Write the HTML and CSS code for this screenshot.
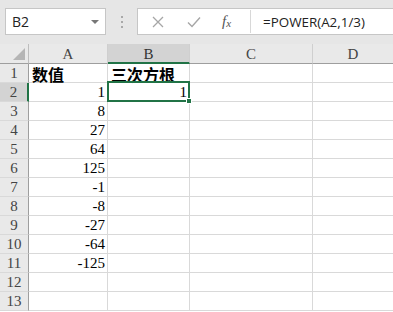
FILE: index.html
```html
<!DOCTYPE html>
<html lang="zh">
<head>
<meta charset="utf-8">
<link rel="stylesheet" href="styles.css">
</head>
<body>
<div class="toolbar">
  <div class="namebox"><span>B2</span><span class="caret"></span></div>
  <div class="dots"><i></i><i></i><i></i></div>
  <div class="fbar">
    <div class="fbtns">
      <svg class="ico" width="14" height="14" viewBox="0 0 14 14"><path d="M2 2L12 12M12 2L2 12" stroke="#a6a6a6" stroke-width="1.3" fill="none"/></svg>
      <svg class="ico" width="16" height="14" viewBox="0 0 16 14"><path d="M2 7.5L6 11.5L14 2.5" stroke="#a6a6a6" stroke-width="1.4" fill="none"/></svg>
      <span class="fx"><i>f</i><sub>x</sub></span>
    </div>
    <div class="ftext">=POWER(A2,1/3)</div>
  </div>
</div>
<div class="gap"></div>
<div class="sheet">
  <div class="hd corner"><span class="tri"></span></div>
  <div class="hd col">A</div>
  <div class="hd col sel">B</div>
  <div class="hd col">C</div>
  <div class="hd col last">D</div>

  <div class="hd row">1</div><div class="c zh">数值</div><div class="c zh">三次方根</div><div class="c"></div><div class="c last"></div>
  <div class="hd row sel">2</div><div class="c n">1</div><div class="c n active">1<span class="handle"></span></div><div class="c"></div><div class="c last"></div>
  <div class="hd row">3</div><div class="c n">8</div><div class="c"></div><div class="c"></div><div class="c last"></div>
  <div class="hd row">4</div><div class="c n">27</div><div class="c"></div><div class="c"></div><div class="c last"></div>
  <div class="hd row">5</div><div class="c n">64</div><div class="c"></div><div class="c"></div><div class="c last"></div>
  <div class="hd row">6</div><div class="c n">125</div><div class="c"></div><div class="c"></div><div class="c last"></div>
  <div class="hd row">7</div><div class="c n">-1</div><div class="c"></div><div class="c"></div><div class="c last"></div>
  <div class="hd row">8</div><div class="c n">-8</div><div class="c"></div><div class="c"></div><div class="c last"></div>
  <div class="hd row">9</div><div class="c n">-27</div><div class="c"></div><div class="c"></div><div class="c last"></div>
  <div class="hd row">10</div><div class="c n">-64</div><div class="c"></div><div class="c"></div><div class="c last"></div>
  <div class="hd row">11</div><div class="c n">-125</div><div class="c"></div><div class="c"></div><div class="c last"></div>
  <div class="hd row">12</div><div class="c"></div><div class="c"></div><div class="c"></div><div class="c last"></div>
  <div class="hd row">13</div><div class="c"></div><div class="c"></div><div class="c"></div><div class="c last"></div>
</div>
</body>
</html>
```
FILE: styles.css
```css
* { box-sizing: border-box; }
html, body { margin: 0; padding: 0; }
body {
  width: 393px;
  height: 312px;
  overflow: hidden;
  background: #fff;
  font-family: "Liberation Serif", "Noto Sans CJK SC", serif;
}
.toolbar {
  height: 35px;
  background: #e6e6e6;
  display: flex;
  align-items: flex-end;
  padding-left: 5px;
}
.namebox {
  width: 101px;
  height: 27px;
  background: #fff;
  border: 1px solid #c6c6c6;
  display: flex;
  align-items: center;
  justify-content: space-between;
  padding: 0 5px 0 6px;
  font-family: "Open Sans", "Liberation Sans", sans-serif;
  font-size: 14px;
  color: #222;
}
.caret {
  width: 0; height: 0;
  border-left: 4px solid transparent;
  border-right: 4px solid transparent;
  border-top: 4px solid #777;
  margin-right: 1px;
}
.dots {
  width: 31px;
  height: 27px;
  display: flex;
  flex-direction: column;
  align-items: center;
  justify-content: center;
  gap: 3px;
}
.dots i { width: 2px; height: 2px; background: #a8a8a8; display: block; }
.fbar {
  flex: 1;
  height: 27px;
  background: #fff;
  border: 1px solid #c6c6c6;
  border-right: none;
  display: flex;
}
.fbtns {
  width: 113px;
  display: flex;
  align-items: center;
  padding-left: 13px;
  border-right: 1px solid #d8d8d8;
  margin: 1px 0;
}
.fbtns .ico { display: block; }
.fbtns .ico:first-child { margin-right: 21px; }
.fx {
  margin-left: 20px;
  font-family: "Liberation Serif", serif;
  font-size: 15px;
  color: #555;
  line-height: 1;
}
.fx sub { font-size: 11px; font-style: italic; vertical-align: -1px; }
.ftext {
  padding-left: 12px;
  font-family: "Open Sans", "Liberation Sans", sans-serif;
  font-size: 13.4px;
  color: #222;
  display: flex;
  align-items: center;
}
.gap { height: 9px; background: #e6e6e6; }
.sheet {
  display: grid;
  grid-template-columns: 29px 79px 82px 123px 1fr;
  grid-template-rows: 20px repeat(13, 19px);
}
.hd {
  background: #e9e9e9;
  color: #444;
  font-size: 15px;
  display: flex;
  align-items: center;
  justify-content: center;
}
.col {
  border-right: 1px solid #cfcfcf;
  border-bottom: 1px solid #9e9e9e;
  padding-top: 2px;
}
.col.last { border-right: none; }
.col.sel {
  background: #d3d3d3;
  border-bottom: 2px solid #217346;
  color: #333;
}
.corner {
  border-right: 1px solid #bdbdbd;
  border-bottom: 1px solid #9e9e9e;
  position: relative;
}
.tri {
  position: absolute;
  right: 3px;
  bottom: 3px;
  width: 0; height: 0;
  border-left: 12px solid transparent;
  border-bottom: 12px solid #b5b5b5;
}
.row {
  border-right: 1px solid #9e9e9e;
  border-bottom: 1px solid #d9d9d9;
  padding-top: 1px;
}
.row.sel {
  background: #d3d3d3;
  border-right: 2px solid #217346;
}
.c {
  border-right: 1px solid #d9d9d9;
  border-bottom: 1px solid #d9d9d9;
  font-size: 15px;
  color: #000;
  display: flex;
  align-items: center;
  line-height: 1;
  padding-top: 1px;
}
.c.last { border-right: none; }
.c.n { justify-content: flex-end; padding-right: 2px; }
.c.zh {
  font-family: "Noto Sans CJK SC", sans-serif;
  font-weight: 700;
  font-size: 16px;
  padding-left: 3px;
}
.c.active { position: relative; }
.c.active::before {
  content: "";
  position: absolute;
  left: -1px;
  top: -2px;
  right: -1px;
  bottom: -1px;
  border: 2px solid #217346;
}
.handle {
  position: absolute;
  right: -3px;
  bottom: -3px;
  width: 6px;
  height: 6px;
  background: #217346;
  border: 1px solid #fff;
}
```
